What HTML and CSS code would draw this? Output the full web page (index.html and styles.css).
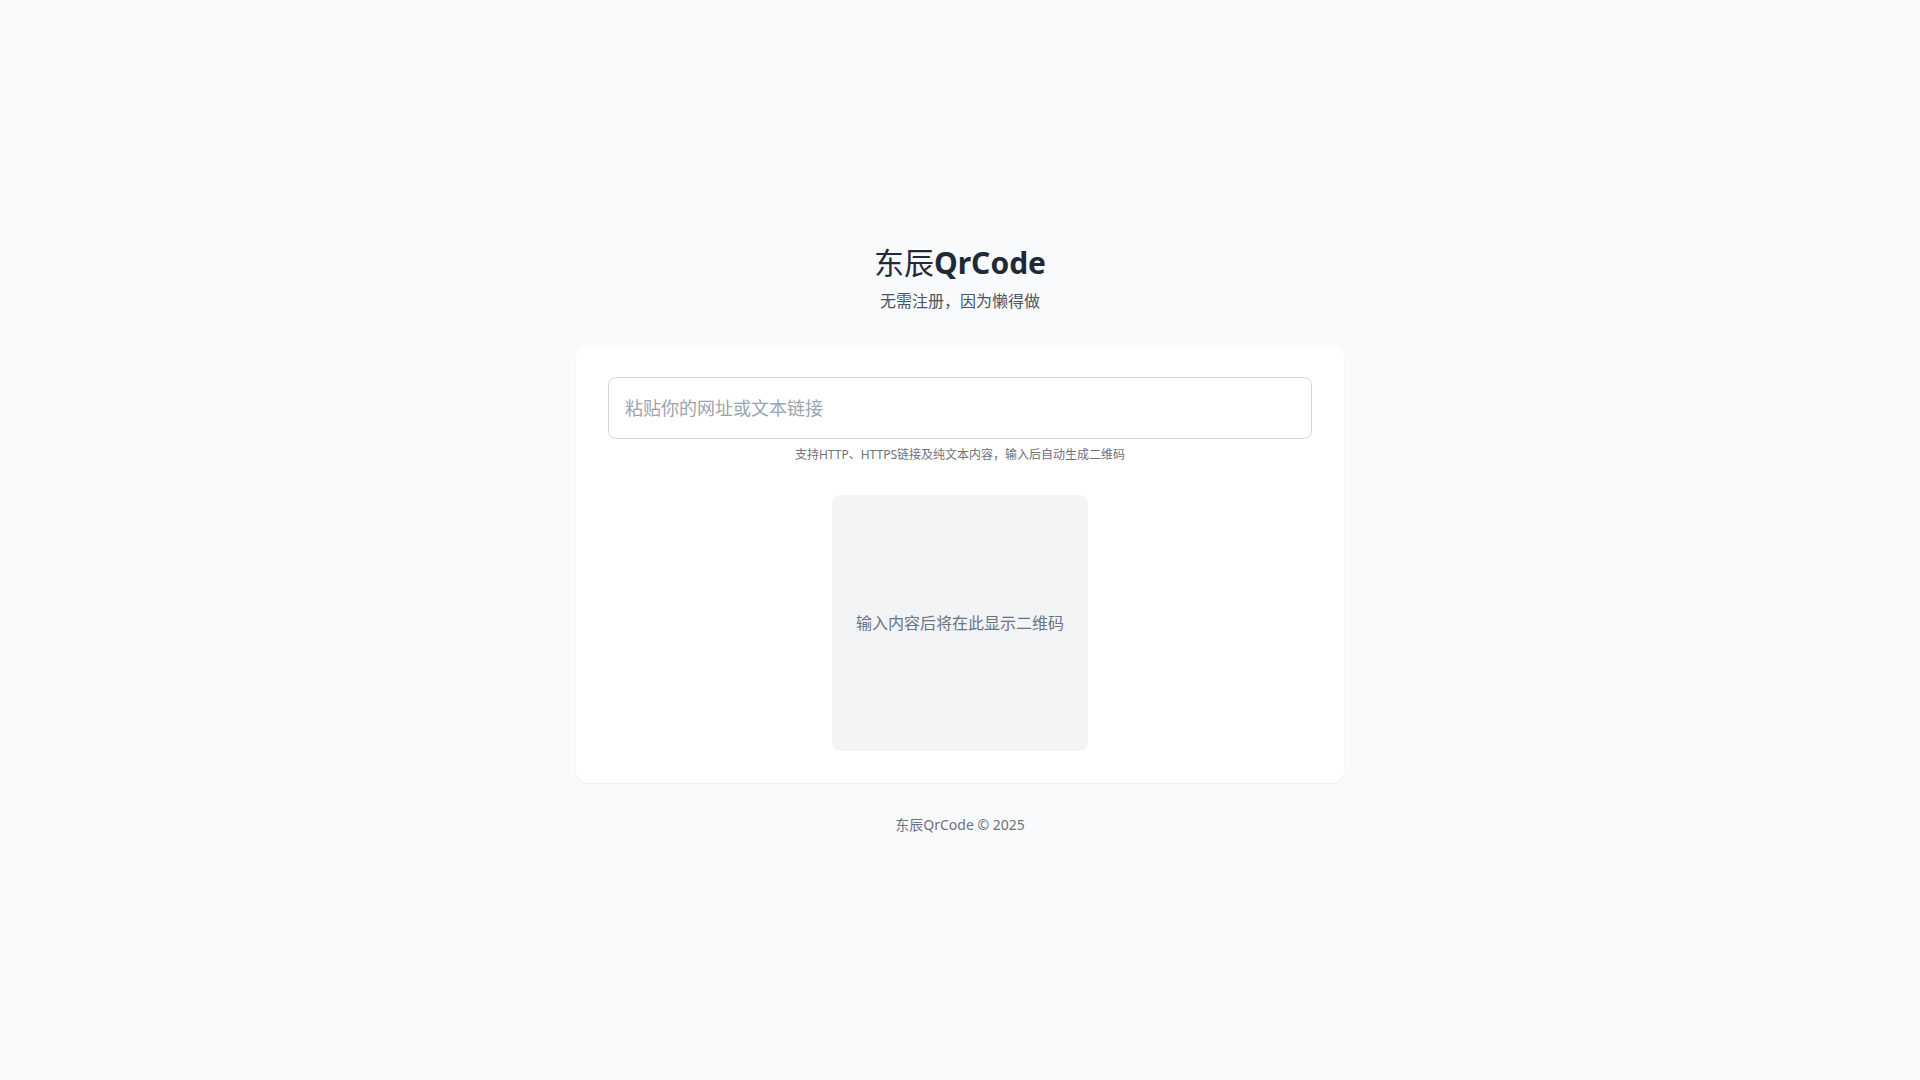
FILE: index.html
```html
<!DOCTYPE html>
<html lang="zh-CN">
<head>
    <meta charset="UTF-8">
    <meta name="viewport" content="width=device-width, initial-scale=1.0">
    <title>东辰QrCode</title>
    <link rel="stylesheet" href="styles.css">
</head>
<body>
<div class="page">
    <div class="container">
        <header class="header">
            <h1 class="title">东辰<span class="brand">QrCode</span></h1>
            <p class="subtitle">无需注册，因为懒得做</p>
        </header>

        <div class="card">
            <input type="text" class="url-input" placeholder="粘贴你的网址或文本链接">
            <p class="hint">支持HTTP、HTTPS链接及纯文本内容，输入后自动生成二维码</p>

            <div class="qr-box">
                <span class="qr-empty">输入内容后将在此显示二维码</span>
            </div>
        </div>

        <footer class="footer">东辰QrCode © 2025</footer>
    </div>
</div>
</body>
</html>
```

FILE: styles.css
```css
* {
    margin: 0;
    padding: 0;
    box-sizing: border-box;
}

body {
    font-family: "Noto Sans", "Noto Sans CJK SC", sans-serif;
    background-color: #f9fafb;
    color: #1f2937;
}

.page {
    min-height: 100vh;
    display: flex;
    align-items: center;
    justify-content: center;
}

.container {
    width: 768px;
}

/* Header */
.header {
    text-align: center;
    margin-bottom: 32px;
}

.title {
    font-size: 30px;
    line-height: 36px;
    font-weight: 400;
    color: #1f2937;
}

.title .brand {
    font-weight: 700;
}

.subtitle {
    margin-top: 8px;
    font-size: 16px;
    line-height: 24px;
    color: #4b5563;
}

/* Card */
.card {
    background-color: #fff;
    border-radius: 12px;
    box-shadow: 0 1px 2px rgba(0, 0, 0, 0.05);
    padding: 32px;
}

.url-input {
    display: block;
    width: 100%;
    padding: 16px;
    font-family: inherit;
    font-size: 18px;
    line-height: 28px;
    color: #1f2937;
    border: 1px solid #d1d5db;
    border-radius: 8px;
    outline: none;
}

.url-input::placeholder {
    color: #9ca3af;
}

.hint {
    margin-top: 8px;
    font-size: 12px;
    line-height: 16px;
    color: #6b7280;
    text-align: center;
}

.qr-box {
    width: 256px;
    height: 256px;
    margin: 32px auto 0;
    background-color: #f3f4f6;
    border-radius: 8px;
    display: flex;
    align-items: center;
    justify-content: center;
}

.qr-empty {
    font-size: 16px;
    line-height: 24px;
    color: #6b7280;
}

/* Footer */
.footer {
    margin-top: 32px;
    text-align: center;
    font-size: 14px;
    line-height: 20px;
    color: #6b7280;
}
```
